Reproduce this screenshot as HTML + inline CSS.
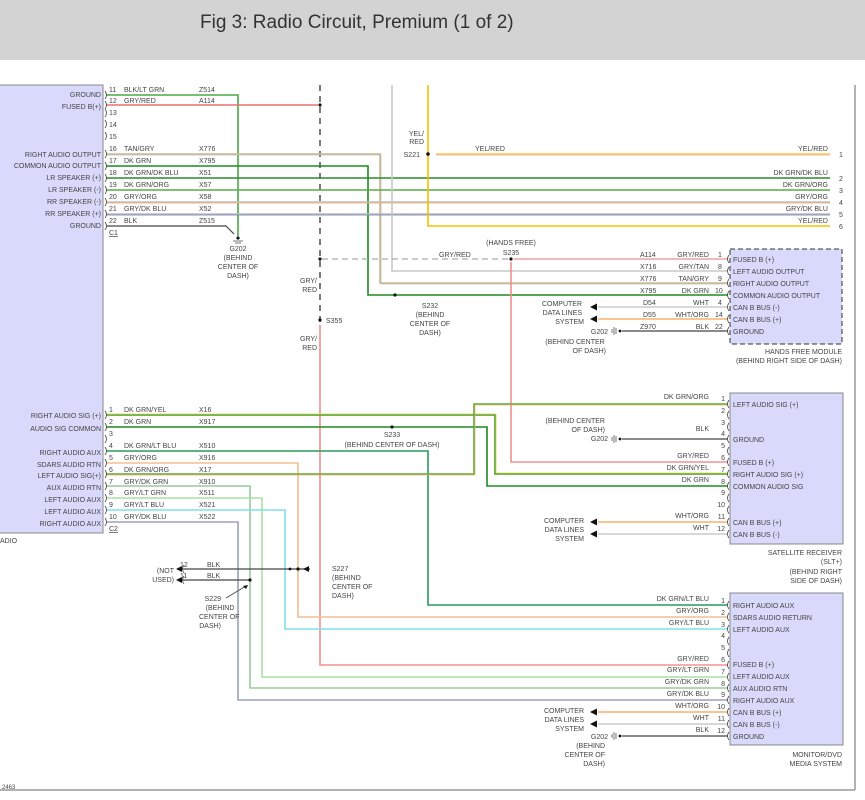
<!DOCTYPE html>
<html><head><meta charset="utf-8"><style>
body{margin:0;background:#fff;width:865px;height:800px;overflow:hidden;font-family:"Liberation Sans",sans-serif}
#hdr{position:absolute;left:0;top:0;width:865px;height:60px;background:#d3d3d3}
#hdr span{position:absolute;left:200px;top:12px;font-size:19px;color:#333}
svg{position:absolute;left:0;top:0}
text{font-family:"Liberation Sans",sans-serif;font-size:7px;fill:#444}
.r{text-anchor:end}.m{text-anchor:middle}
</style></head><body>
<div id="hdr"><span>Fig 3: Radio Circuit, Premium (1 of 2)</span></div>
<svg width="865" height="800" viewBox="0 0 865 800">
<!-- frame -->
<line x1="855" y1="85" x2="855" y2="790" stroke="#999" stroke-width="1.5"/>
<line x1="0" y1="790" x2="855" y2="790" stroke="#999" stroke-width="1.5"/>
<text x="2" y="789" style="font-size:6px">2463</text>
<!-- radio box -->
<rect x="-2" y="85" width="105" height="448" fill="#d9d9fb" stroke="#888"/>
<g fill="none" stroke-width="1.6">
<!-- dashed black vertical -->
<line x1="320" y1="85" x2="320" y2="322" stroke="#333" stroke-dasharray="6,5" stroke-width="1.3"/>
<!-- C1 wires -->
<polyline points="106,95 238,95 238,236" stroke="#4aa84a"/>
<line x1="106" y1="105" x2="318" y2="105" stroke="#e87070"/>
<polyline points="106,154 380,154 380,283 728,283" stroke="#c8b88a"/>
<polyline points="106,155 381,155 381,284 728,284" stroke="#bbb" stroke-width="0.8"/>
<polyline points="106,166 368,166 368,295 728,295" stroke="#1e8a1e"/>
<line x1="106" y1="178" x2="830" y2="178" stroke="#2d8a2d"/>
<line x1="106" y1="190" x2="830" y2="190" stroke="#5aaa4a"/>
<line x1="106" y1="202" x2="830" y2="202" stroke="#c0c0c0"/><line x1="106" y1="203" x2="830" y2="203" stroke="#eea060" stroke-width="0.8"/>
<line x1="106" y1="214" x2="830" y2="214" stroke="#bbb"/><line x1="106" y1="215" x2="830" y2="215" stroke="#6677aa" stroke-width="0.8"/>
<polyline points="106,226 226,226 234,234" stroke="#444" stroke-width="1.2"/>
<!-- gry/tan vertical -->
<polyline points="392,85 392,271 728,271" stroke="#c8c8c8"/>
<!-- yel/red -->
<polyline points="428,85 428,226 830,226" stroke="#f5c000"/>
<line x1="436" y1="154" x2="830" y2="154" stroke="#f8d040"/><line x1="436" y1="155" x2="830" y2="155" stroke="#f0a0a0" stroke-width="0.8"/>
<!-- gry/red dashed -->
<line x1="322" y1="259" x2="508" y2="259" stroke="#aaa" stroke-dasharray="6,4" stroke-width="1.2"/>
<line x1="514" y1="259" x2="728" y2="259" stroke="#f0a0a0"/>
<polyline points="511,262 511,462 728,462" stroke="#f09090"/>
<!-- red vertical -->
<polyline points="320,325 320,665 728,665" stroke="#f09090"/>
<!-- HF data -->
<line x1="598" y1="307" x2="728" y2="307" stroke="#ccc"/>
<line x1="598" y1="319" x2="728" y2="319" stroke="#f5b070"/>
<line x1="622" y1="331" x2="728" y2="331" stroke="#444" stroke-width="1.2"/>
<!-- C2 wires -->
<polyline points="106,415 495,415 495,474 728,474" stroke="#4a9a2a"/>
<polyline points="106,414 496,414 496,473 728,473" stroke="#d8d840" stroke-width="0.8"/>
<polyline points="106,427 487,427 487,486 728,486" stroke="#1e8a1e"/>
<polyline points="106,451 428,451 428,605 728,605" stroke="#2a9a5a"/>
<polyline points="106,463 298,463 298,617 728,617" stroke="#f0c090"/>
<polyline points="106,474 474,474 474,404 728,404" stroke="#5aaa3a"/>
<polyline points="106,475 475,475 475,405 728,405" stroke="#e8b060" stroke-width="0.7"/>
<polyline points="106,486 250,486 250,688 728,688" stroke="#9ac89a"/>
<polyline points="106,498 262,498 262,677 728,677" stroke="#a8e0a0"/>
<polyline points="106,510 285,510 285,629 728,629" stroke="#80e0e8"/>
<polyline points="106,522 238,522 238,700 728,700" stroke="#9aa0b8"/>
<!-- sat -->
<line x1="622" y1="439" x2="728" y2="439" stroke="#444" stroke-width="1.2"/>
<line x1="598" y1="522" x2="728" y2="522" stroke="#f5b070"/>
<line x1="598" y1="534" x2="728" y2="534" stroke="#ccc"/>
<!-- monitor -->
<line x1="598" y1="712" x2="728" y2="712" stroke="#f5b070"/>
<line x1="598" y1="724" x2="728" y2="724" stroke="#ccc"/>
<line x1="622" y1="736" x2="728" y2="736" stroke="#444" stroke-width="1.2"/>
<!-- not used -->
<line x1="182" y1="569" x2="310" y2="569" stroke="#444" stroke-width="1.2"/>
<line x1="182" y1="580" x2="250" y2="580" stroke="#444" stroke-width="1.2"/>
<line x1="226" y1="598" x2="246" y2="586" stroke="#444" stroke-width="0.8"/>
</g>
<!-- arrows -->
<g fill="#111">
<path d="M590,307 l7,-3.5 v7z"/><path d="M590,319 l7,-3.5 v7z"/>
<path d="M590,522 l7,-3.5 v7z"/><path d="M590,534 l7,-3.5 v7z"/>
<path d="M590,712 l7,-3.5 v7z"/><path d="M590,724 l7,-3.5 v7z"/>
<path d="M303,569 l6,-3 v6z"/><path d="M248,585 l-5,1 l3,3z"/>
<path d="M176,569 l6,-3 v6z"/><path d="M176,580 l6,-3 v6z"/>
<circle cx="320" cy="105" r="1.6"/><circle cx="320" cy="259" r="1.6"/><circle cx="320" cy="320" r="1.6"/>
<circle cx="428" cy="154" r="1.8"/><circle cx="511" cy="259" r="1.6"/><circle cx="395" cy="295" r="1.6"/>
<circle cx="392" cy="427" r="1.6"/><circle cx="298" cy="569" r="1.6"/><circle cx="290" cy="569" r="1.4"/><circle cx="250" cy="580" r="1.6"/>
<circle cx="238" cy="238" r="1.6"/>
<circle cx="620" cy="331" r="1.4"/><circle cx="620" cy="439" r="1.4"/><circle cx="620" cy="736" r="1.4"/>
</g>
<g stroke="#777" stroke-width="1">
<path d="M233,241 h10 M235,243 h6"/>
<path d="M614,327 v8 M616,328 v6 M612,329 v4"/><path d="M614,435 v8 M616,436 v6 M612,437 v4"/><path d="M614,732 v8 M616,733 v6 M612,734 v4"/>
</g>
<!-- module boxes -->
<rect x="730" y="249" width="112" height="95" fill="#d9d9fb" stroke="#333" stroke-dasharray="5,3"/>
<rect x="730" y="393" width="113" height="151" fill="#d9d9fb" stroke="#888"/>
<rect x="730" y="593" width="113" height="152" fill="#d9d9fb" stroke="#888"/>
<!-- brackets -->
<g fill="none" stroke="#444" stroke-width="0.8">
<path d="M105,91 q3,4 0,8 M105,101 q3,4 0,8 M105,109 q3,4 0,8 M105,120 q3,4 0,8 M105,132 q3,4 0,8 M105,150 q3,4 0,8 M105,162 q3,4 0,8 M105,174 q3,4 0,8 M105,186 q3,4 0,8 M105,198 q3,4 0,8 M105,210 q3,4 0,8 M105,222 q3,4 0,8"/>
<path d="M105,411 q3,4 0,8 M105,423 q3,4 0,8 M105,435 q3,4 0,8 M105,447 q3,4 0,8 M105,459 q3,4 0,8 M105,470 q3,4 0,8 M105,482 q3,4 0,8 M105,494 q3,4 0,8 M105,506 q3,4 0,8 M105,518 q3,4 0,8"/>
<path d="M729,255 q-3,4 0,8 M729,267 q-3,4 0,8 M729,279 q-3,4 0,8 M729,291 q-3,4 0,8 M729,303 q-3,4 0,8 M729,315 q-3,4 0,8 M729,327 q-3,4 0,8"/>
<path d="M729,400 q-3,4 0,8 M729,411 q-3,4 0,8 M729,423 q-3,4 0,8 M729,435 q-3,4 0,8 M729,447 q-3,4 0,8 M729,458 q-3,4 0,8 M729,470 q-3,4 0,8 M729,482 q-3,4 0,8 M729,494 q-3,4 0,8 M729,506 q-3,4 0,8 M729,518 q-3,4 0,8 M729,530 q-3,4 0,8"/>
<path d="M729,601 q-3,4 0,8 M729,613 q-3,4 0,8 M729,625 q-3,4 0,8 M729,637 q-3,4 0,8 M729,649 q-3,4 0,8 M729,661 q-3,4 0,8 M729,673 q-3,4 0,8 M729,684 q-3,4 0,8 M729,696 q-3,4 0,8 M729,708 q-3,4 0,8 M729,720 q-3,4 0,8 M729,732 q-3,4 0,8"/>
<path d="M184,565 q-3,4 0,8 M184,576 q-3,4 0,8"/>
</g>
<!-- C1 text -->
<g class="r">
<text x="101" y="97" class="r">GROUND</text><text x="101" y="109" class="r">FUSED B(+)</text>
<text x="101" y="157" class="r">RIGHT AUDIO OUTPUT</text><text x="101" y="168" class="r">COMMON AUDIO OUTPUT</text>
<text x="101" y="180" class="r">LR SPEAKER (+)</text><text x="101" y="192" class="r">LR SPEAKER (-)</text>
<text x="101" y="204" class="r">RR SPEAKER (-)</text><text x="101" y="216" class="r">RR SPEAKER (+)</text>
<text x="101" y="228" class="r">GROUND</text>
<text x="101" y="418" class="r">RIGHT AUDIO SIG (+)</text><text x="101" y="431" class="r">AUDIO SIG COMMON</text>
<text x="101" y="455" class="r">RIGHT AUDIO AUX</text><text x="101" y="467" class="r">SDARS AUDIO RTN</text>
<text x="101" y="478" class="r">LEFT AUDIO SIG(+)</text><text x="101" y="490" class="r">AUX AUDIO RTN</text>
<text x="101" y="502" class="r">LEFT AUDIO AUX</text><text x="101" y="514" class="r">LEFT AUDIO AUX</text>
<text x="101" y="526" class="r">RIGHT AUDIO AUX</text>
</g>
<text x="0" y="543">ADIO</text>
<text x="109" y="92">11</text><text x="124" y="92">BLK/LT GRN</text><text x="199" y="92">Z514</text>
<text x="109" y="103">12</text><text x="124" y="103">GRY/RED</text><text x="199" y="103">A114</text>
<text x="109" y="115">13</text><text x="109" y="127">14</text><text x="109" y="139">15</text>
<text x="109" y="151">16</text><text x="124" y="151">TAN/GRY</text><text x="199" y="151">X776</text>
<text x="109" y="163">17</text><text x="124" y="163">DK GRN</text><text x="199" y="163">X795</text>
<text x="109" y="175">18</text><text x="124" y="175">DK GRN/DK BLU</text><text x="199" y="175">X51</text>
<text x="109" y="187">19</text><text x="124" y="187">DK GRN/ORG</text><text x="199" y="187">X57</text>
<text x="109" y="199">20</text><text x="124" y="199">GRY/ORG</text><text x="199" y="199">X58</text>
<text x="109" y="211">21</text><text x="124" y="211">GRY/DK BLU</text><text x="199" y="211">X52</text>
<text x="109" y="223">22</text><text x="124" y="223">BLK</text><text x="199" y="223">Z515</text>
<text x="109" y="235" text-decoration="underline">C1</text>
<text x="238" y="251" class="m">G202</text><text x="238" y="260" class="m">(BEHIND</text><text x="238" y="269" class="m">CENTER OF</text><text x="238" y="278" class="m">DASH)</text>
<text x="109" y="412">1</text><text x="124" y="412">DK GRN/YEL</text><text x="199" y="412">X16</text>
<text x="109" y="424">2</text><text x="124" y="424">DK GRN</text><text x="199" y="424">X917</text>
<text x="109" y="436">3</text>
<text x="109" y="448">4</text><text x="124" y="448">DK GRN/LT BLU</text><text x="199" y="448">X510</text>
<text x="109" y="460">5</text><text x="124" y="460">GRY/ORG</text><text x="199" y="460">X916</text>
<text x="109" y="472">6</text><text x="124" y="472">DK GRN/ORG</text><text x="199" y="472">X17</text>
<text x="109" y="484">7</text><text x="124" y="484">GRY/DK GRN</text><text x="199" y="484">X910</text>
<text x="109" y="495">8</text><text x="124" y="495">GRY/LT GRN</text><text x="199" y="495">X511</text>
<text x="109" y="507">9</text><text x="124" y="507">GRY/LT BLU</text><text x="199" y="507">X521</text>
<text x="109" y="519">10</text><text x="124" y="519">GRY/DK BLU</text><text x="199" y="519">X522</text>
<text x="109" y="531" text-decoration="underline">C2</text>
<!-- not used -->
<text x="180" y="567">12</text><text x="207" y="567">BLK</text><text x="180" y="578">11</text><text x="207" y="578">BLK</text>
<text x="174" y="573" class="r">(NOT</text><text x="174" y="582" class="r">USED)</text>
<text x="221" y="601" class="r">S229</text><text x="220" y="610" class="m">(BEHIND</text><text x="199" y="619">CENTER OF</text><text x="221" y="628" class="r">DASH)</text>
<text x="332" y="571">S227</text><text x="332" y="580">(BEHIND</text><text x="332" y="589">CENTER OF</text><text x="332" y="598">DASH)</text>
<!-- middle labels -->
<text x="317" y="283" class="r">GRY/</text><text x="317" y="292" class="r">RED</text>
<text x="326" y="323">S355</text>
<text x="317" y="341" class="r">GRY/</text><text x="317" y="350" class="r">RED</text>
<text x="424" y="136" class="r">YEL/</text><text x="424" y="144" class="r">RED</text><text x="420" y="157" class="r">S221</text>
<text x="475" y="151">YEL/RED</text>
<text x="828" y="151" class="r">YEL/RED</text><text x="828" y="175" class="r">DK GRN/DK BLU</text><text x="828" y="187" class="r">DK GRN/ORG</text>
<text x="828" y="199" class="r">GRY/ORG</text><text x="828" y="211" class="r">GRY/DK BLU</text><text x="828" y="223" class="r">YEL/RED</text>
<text x="839" y="157">1</text><text x="839" y="181">2</text><text x="839" y="193">3</text><text x="839" y="205">4</text><text x="839" y="217">5</text><text x="839" y="229">6</text>
<text x="439" y="257">GRY/RED</text>
<text x="511" y="245" class="m">(HANDS FREE)</text><text x="511" y="255" class="m">S235</text>
<text x="430" y="308" class="m">S232</text><text x="430" y="317" class="m">(BEHIND</text><text x="430" y="326" class="m">CENTER OF</text><text x="430" y="335" class="m">DASH)</text>
<!-- HF -->
<text x="640" y="257">A114</text><text x="709" y="257" class="r">GRY/RED</text><text x="718" y="257">1</text>
<text x="640" y="269">X716</text><text x="709" y="269" class="r">GRY/TAN</text><text x="718" y="269">8</text>
<text x="640" y="281">X776</text><text x="709" y="281" class="r">TAN/GRY</text><text x="718" y="281">9</text>
<text x="640" y="293">X795</text><text x="709" y="293" class="r">DK GRN</text><text x="715" y="293">10</text>
<text x="643" y="305">D54</text><text x="709" y="305" class="r">WHT</text><text x="718" y="305">4</text>
<text x="643" y="317">D55</text><text x="709" y="317" class="r">WHT/ORG</text><text x="715" y="317">14</text>
<text x="640" y="329">Z970</text><text x="709" y="329" class="r">BLK</text><text x="715" y="329">22</text>
<text x="582" y="306" class="r">COMPUTER</text><text x="582" y="315" class="r">DATA LINES</text><text x="584" y="324" class="r">SYSTEM</text>
<text x="608" y="334" class="r">G202</text><text x="575" y="344" class="m">(BEHIND CENTER</text><text x="606" y="353" class="r">OF DASH)</text>
<text x="733" y="262">FUSED B (+)</text><text x="733" y="274">LEFT AUDIO OUTPUT</text><text x="733" y="286">RIGHT AUDIO OUTPUT</text>
<text x="733" y="298">COMMON AUDIO OUTPUT</text><text x="733" y="310">CAN B BUS (-)</text><text x="733" y="322">CAN B BUS (+)</text><text x="733" y="334">GROUND</text>
<text x="842" y="354" class="r">HANDS FREE MODULE</text><text x="842" y="363" class="r">(BEHIND RIGHT SIDE OF DASH)</text>
<!-- S233 -->
<text x="392" y="437" class="m">S233</text><text x="392" y="447" class="m">(BEHIND CENTER OF DASH)</text>
<!-- sat -->
<text x="709" y="399" class="r">DK GRN/ORG</text><text x="709" y="431" class="r">BLK</text>
<text x="709" y="458" class="r">GRY/RED</text><text x="709" y="470" class="r">DK GRN/YEL</text><text x="709" y="482" class="r">DK GRN</text>
<text x="709" y="518" class="r">WHT/ORG</text><text x="709" y="530" class="r">WHT</text>
<text x="605" y="423" class="r">(BEHIND CENTER</text><text x="605" y="432" class="r">OF DASH)</text><text x="608" y="441" class="r">G202</text>
<text x="584" y="523" class="r">COMPUTER</text><text x="584" y="532" class="r">DATA LINES</text><text x="584" y="541" class="r">SYSTEM</text>
<g class="r"><text x="725" y="401" class="r">1</text><text x="725" y="413" class="r">2</text><text x="725" y="425" class="r">3</text><text x="725" y="436" class="r">4</text><text x="725" y="448" class="r">5</text><text x="725" y="460" class="r">6</text><text x="725" y="472" class="r">7</text><text x="725" y="484" class="r">8</text><text x="725" y="495" class="r">9</text><text x="725" y="507" class="r">10</text><text x="725" y="519" class="r">11</text><text x="725" y="531" class="r">12</text></g>
<text x="733" y="407">LEFT AUDIO SIG (+)</text><text x="733" y="442">GROUND</text><text x="733" y="465">FUSED B (+)</text>
<text x="733" y="477">RIGHT AUDIO SIG (+)</text><text x="733" y="489">COMMON AUDIO SIG</text>
<text x="733" y="525">CAN B BUS (+)</text><text x="733" y="537">CAN B BUS (-)</text>
<text x="842" y="555" class="r">SATELLITE RECEIVER</text><text x="842" y="564" class="r">(SLT+)</text><text x="842" y="574" class="r">(BEHIND RIGHT</text><text x="842" y="583" class="r">SIDE OF DASH)</text>
<!-- monitor -->
<text x="709" y="601" class="r">DK GRN/LT BLU</text><text x="709" y="613" class="r">GRY/ORG</text><text x="709" y="625" class="r">GRY/LT BLU</text>
<text x="709" y="661" class="r">GRY/RED</text><text x="709" y="672" class="r">GRY/LT GRN</text><text x="709" y="684" class="r">GRY/DK GRN</text>
<text x="709" y="696" class="r">GRY/DK BLU</text><text x="709" y="708" class="r">WHT/ORG</text><text x="709" y="720" class="r">WHT</text><text x="709" y="732" class="r">BLK</text>
<g><text x="725" y="603" class="r">1</text><text x="725" y="615" class="r">2</text><text x="725" y="627" class="r">3</text><text x="725" y="638" class="r">4</text><text x="725" y="650" class="r">5</text><text x="725" y="662" class="r">6</text><text x="725" y="674" class="r">7</text><text x="725" y="686" class="r">8</text><text x="725" y="697" class="r">9</text><text x="725" y="709" class="r">10</text><text x="725" y="721" class="r">11</text><text x="725" y="733" class="r">12</text></g>
<text x="733" y="608">RIGHT AUDIO AUX</text><text x="733" y="620">SDARS AUDIO RETURN</text><text x="733" y="632">LEFT AUDIO AUX</text>
<text x="733" y="667">FUSED B (+)</text><text x="733" y="679">LEFT AUDIO AUX</text><text x="733" y="691">AUX AUDIO RTN</text>
<text x="733" y="703">RIGHT AUDIO AUX</text><text x="733" y="715">CAN B BUS (+)</text><text x="733" y="727">CAN B BUS (-)</text><text x="733" y="739">GROUND</text>
<text x="584" y="713" class="r">COMPUTER</text><text x="584" y="722" class="r">DATA LINES</text><text x="584" y="731" class="r">SYSTEM</text>
<text x="608" y="739" class="r">G202</text><text x="605" y="748" class="r">(BEHIND</text><text x="605" y="757" class="r">CENTER OF</text><text x="605" y="766" class="r">DASH)</text>
<text x="842" y="757" class="r">MONITOR/DVD</text><text x="842" y="766" class="r">MEDIA SYSTEM</text>
</svg>
</body></html>
